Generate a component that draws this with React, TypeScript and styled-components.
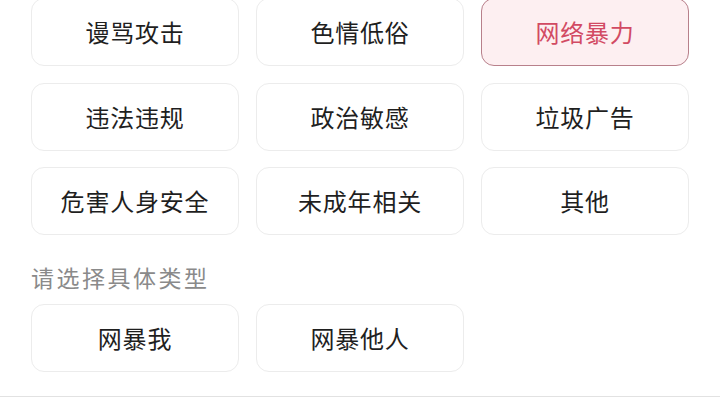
import React, { useState } from "react";
import styled, { createGlobalStyle } from "styled-components";

const Global = createGlobalStyle`
  html, body { margin: 0; padding: 0; background: #ffffff; }
  body { font-family: "Noto Sans CJK SC", "Noto Sans", sans-serif; overflow: hidden; }
`;

const Page = styled.div`
  width: 720px;
  height: 405px;
  overflow: hidden;
  display: flex;
  flex-direction: column;
  box-sizing: border-box;
`;

const Body = styled.div`
  padding: 0 31px;
  margin-top: -2px;
  display: flex;
  flex-direction: column;
`;

const Grid = styled.div`
  display: grid;
  grid-template-columns: repeat(3, 208px);
  column-gap: 17px;
  row-gap: 16.5px;
`;

const Option = styled.button<{ $active?: boolean }>`
  height: 68px;
  box-sizing: border-box;
  border-radius: 13px;
  border: 1px solid ${(p) => (p.$active ? "#b8808b" : "#ececec")};
  background: ${(p) => (p.$active ? "#fdeff1" : "#ffffff")};
  color: ${(p) => (p.$active ? "#d24a63" : "#1f1f1f")};
  font-family: "Noto Sans CJK SC", sans-serif;
  font-size: 24px;
  letter-spacing: 0.8px;
  display: flex;
  align-items: center;
  justify-content: center;
  padding: 0 0 1px;
  cursor: pointer;
`;

const Label = styled.div`
  margin-top: 27px;
  margin-bottom: 12px;
  height: 30px;
  line-height: 30px;
  font-size: 23px;
  letter-spacing: 2.5px;
  color: #8a8a8a;
`;

const Divider = styled.div`
  margin-top: 24px;
  height: 1px;
  background: #e2e2e2;
  width: 100%;
  flex-shrink: 0;
`;

const categories = [
  "谩骂攻击",
  "色情低俗",
  "网络暴力",
  "违法违规",
  "政治敏感",
  "垃圾广告",
  "危害人身安全",
  "未成年相关",
  "其他",
];

const subTypes = ["网暴我", "网暴他人"];

export default function App() {
  const [cat, setCat] = useState("网络暴力");
  const [sub, setSub] = useState<string | null>(null);
  return (
    <Page>
      <Global />
      <Body>
        <Grid>
          {categories.map((c) => (
            <Option key={c} $active={c === cat} onClick={() => setCat(c)}>
              {c}
            </Option>
          ))}
        </Grid>
        <Label>请选择具体类型</Label>
        <Grid>
          {subTypes.map((s) => (
            <Option key={s} $active={s === sub} onClick={() => setSub(s)}>
              {s}
            </Option>
          ))}
        </Grid>
      </Body>
      <Divider />
    </Page>
  );
}
